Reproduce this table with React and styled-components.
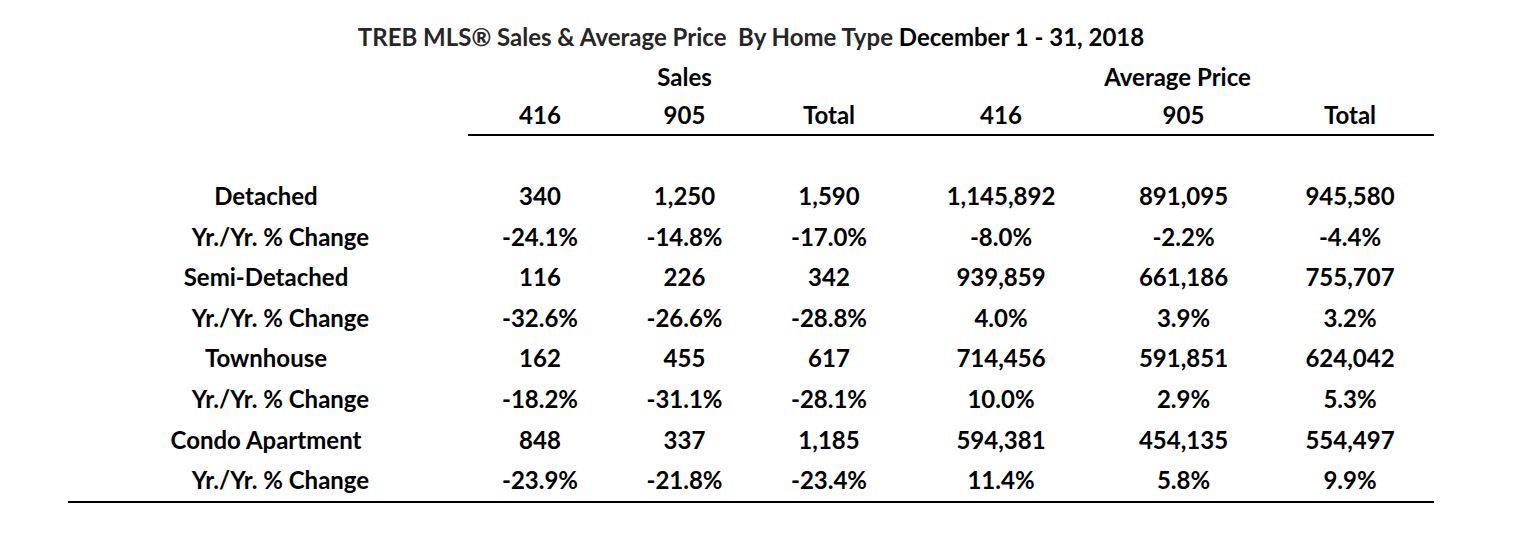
import styled, { createGlobalStyle } from "styled-components";

const GlobalStyle = createGlobalStyle`
    body {
        margin: 0;
        background: #ffffff;
        font-family: Lato, "Open Sans", "DejaVu Sans", sans-serif;
        font-weight: 700;
        color: #000000;
    }
`

const COLS = "400px 144px 145px 144px 200px 165px 168px"

const Page = styled.div`
    width: 1514px;
    height: 556px;
    padding: 17px 0 0 68px;
    box-sizing: border-box;
`

const Table = styled.div`
    width: 1366px;
    display: flex;
    flex-direction: column;
`

const Title = styled.div`
    height: 40px;
    line-height: 40px;
    text-align: center;
    font-size: 24px;
    color: #262626;
    white-space: pre;
`

const TitleDate = styled.span`
    color: #000000;
`

const GroupRow = styled.div`
    display: grid;
    grid-template-columns: 400px 433px 533px;
    height: 39px;
    line-height: 39px;
`

const HeadRow = styled.div`
    display: grid;
    grid-template-columns: ${COLS};
    height: 38px;
    line-height: 38px;
`

const Cell = styled.div`
    text-align: center;
    font-size: 24px;
    white-space: pre;
    padding-left: ${(p) => p.shift || "0"};
`

const HeadRule = styled.div`
    margin-left: 400px;
    height: 2px;
    background: #000000;
`

const Body = styled.div`
    margin-top: 40px;
    border-bottom: 2px solid #000000;
    display: flex;
    flex-direction: column;
`

const Row = styled.div`
    display: grid;
    grid-template-columns: ${COLS};
    height: 40.6px;
    line-height: 40.6px;
`

const Label = styled.div`
    text-align: center;
    font-size: 24px;
    white-space: pre;
    padding-left: ${(p) => (p.change ? "25px" : "0")};
    padding-right: ${(p) => (p.change ? "0" : "4px")};
`

const rows = [
    ["Detached", "340", "1,250", "1,590", "1,145,892", "891,095", "945,580"],
    ["Yr./Yr. % Change", "-24.1%", "-14.8%", "-17.0%", "-8.0%", "-2.2%", "-4.4%"],
    ["Semi-Detached", "116", "226", "342", "939,859", "661,186", "755,707"],
    ["Yr./Yr. % Change", "-32.6%", "-26.6%", "-28.8%", "4.0%", "3.9%", "3.2%"],
    ["Townhouse", "162", "455", "617", "714,456", "591,851", "624,042"],
    ["Yr./Yr. % Change", "-18.2%", "-31.1%", "-28.1%", "10.0%", "2.9%", "5.3%"],
    ["Condo Apartment", "848", "337", "1,185", "594,381", "454,135", "554,497"],
    ["Yr./Yr. % Change", "-23.9%", "-21.8%", "-23.4%", "11.4%", "5.8%", "9.9%"],
]

export default function App() {
    return (
        <>
        <GlobalStyle />
        <Page>
            <Table>
                <Title>
                    {"TREB MLS® Sales & Average Price  By Home Type "}
                    <TitleDate>December 1 - 31, 2018</TitleDate>
                </Title>

                <GroupRow>
                    <Cell />
                    <Cell>Sales</Cell>
                    <Cell shift="20px">Average Price</Cell>
                </GroupRow>

                <HeadRow>
                    <Cell />
                    <Cell>416</Cell>
                    <Cell>905</Cell>
                    <Cell>Total</Cell>
                    <Cell>416</Cell>
                    <Cell>905</Cell>
                    <Cell>Total</Cell>
                </HeadRow>
                <HeadRule />

                <Body>
                    {rows.map((r, i) => (
                        <Row key={i}>
                            <Label change={i % 2 === 1}>{r[0]}</Label>
                            {r.slice(1).map((v, j) => (
                                <Cell key={j}>{v}</Cell>
                            ))}
                        </Row>
                    ))}
                </Body>
            </Table>
        </Page>
        </>
    )
}
